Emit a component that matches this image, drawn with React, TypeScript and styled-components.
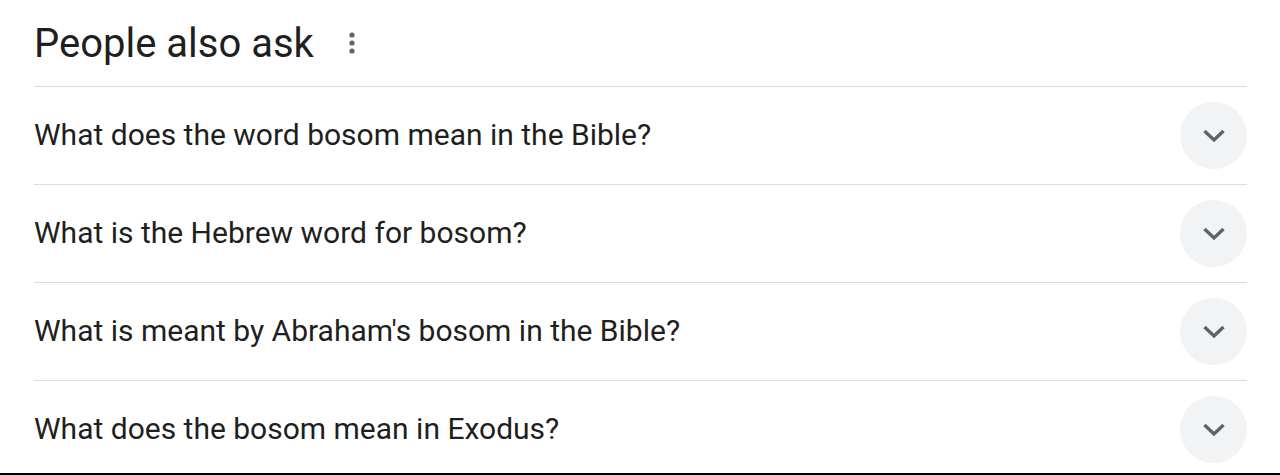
import React from "react";
import styled, { createGlobalStyle } from "styled-components";

const GlobalStyle = createGlobalStyle`
  html, body {
    margin: 0;
    padding: 0;
    background: #fff;
  }
  body {
    font-family: Roboto, "Open Sans", Arial, sans-serif;
    color: #1f1f1f;
  }
`;

const Page = styled.div`
  box-sizing: border-box;
  height: 475px;
  padding: 0 33px 0 34px;
  border-bottom: 2px solid #000;
  overflow: hidden;
`;

const Header = styled.div`
  display: flex;
  align-items: center;
  height: 86px;
  gap: 35px;
`;

const Title = styled.h2`
  margin: 0;
  font-size: 40px;
  font-weight: 400;
  color: #1f1f1f;
`;

const MoreButton = styled.div`
  display: flex;
  align-items: center;
  color: #5f6368;
`;

const Row = styled.div`
  display: flex;
  align-items: center;
  justify-content: space-between;
  height: 98px;
  border-top: 1px solid #dadce0;
  box-sizing: border-box;
`;

const Question = styled.span`
  font-size: 30px;
  padding-bottom: 3px;
  color: #1f1f1f;
`;

const Toggle = styled.div`
  width: 67px;
  height: 67px;
  border-radius: 50%;
  background: #f1f3f4;
  display: flex;
  align-items: center;
  justify-content: center;
  color: #5f6368;
`;

const questions = [
  "What does the word bosom mean in the Bible?",
  "What is the Hebrew word for bosom?",
  "What is meant by Abraham's bosom in the Bible?",
  "What does the bosom mean in Exodus?",
];

const Dots = () => (
  <svg width="6" height="22" viewBox="0 0 6 22" fill="currentColor">
    <circle cx="3" cy="3" r="2.6" />
    <circle cx="3" cy="11" r="2.6" />
    <circle cx="3" cy="19" r="2.6" />
  </svg>
);

const Chevron = () => (
  <svg width="24" height="16" viewBox="0 0 24 16" fill="none">
    <path d="M2.5 3 L12 12 L21.5 3" stroke="currentColor" strokeWidth="3.4" />
  </svg>
);

const App: React.FC = () => (
  <>
    <GlobalStyle />
    <Page>
      <Header>
        <Title>People also ask</Title>
        <MoreButton>
          <Dots />
        </MoreButton>
      </Header>
      {questions.map((q) => (
        <Row key={q}>
          <Question>{q}</Question>
          <Toggle>
            <Chevron />
          </Toggle>
        </Row>
      ))}
    </Page>
  </>
);

export default App;
